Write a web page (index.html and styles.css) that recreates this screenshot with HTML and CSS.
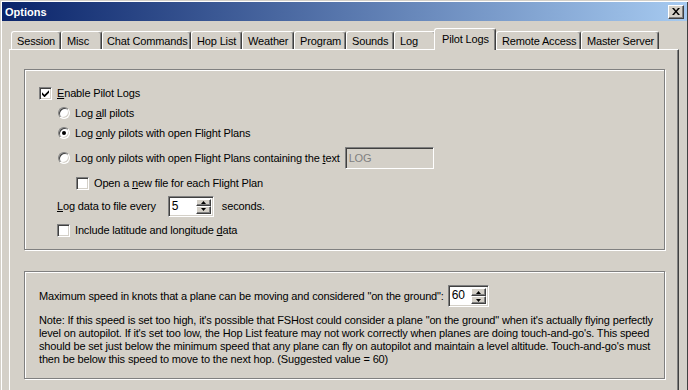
FILE: index.html
```html
<!DOCTYPE html>
<html lang="en">
<head>
    <meta charset="UTF-8">
    <meta name="viewport" content="width=device-width, initial-scale=1.0">
    <title>Options</title>
    <link rel="stylesheet" href="styles.css">
</head>
<body>
    <div class="window">
        <div class="titlebar">
            <span class="title">Options</span>
            <span class="close-btn">
                <svg width="8" height="7" viewBox="0 0 8 7"><path d="M0 0h2l2 2.4L6 0h2L5 3.5 8 7H6L4 4.6 2 7H0l3-3.5z" fill="#000"/></svg>
            </span>
        </div>

        <div class="tabs">
            <div class="tab-strip">
                <div class="tab tab-session">Session</div>
                <div class="tab tab-misc">Misc</div>
                <div class="tab tab-chat">Chat Commands</div>
                <div class="tab tab-hop">Hop List</div>
                <div class="tab tab-weather">Weather</div>
                <div class="tab tab-program">Program</div>
                <div class="tab tab-sounds">Sounds</div>
                <div class="tab tab-log">Log</div>
                <div class="tab tab-pilot active">Pilot Logs</div>
                <div class="tab tab-remote">Remote Access</div>
                <div class="tab tab-master">Master Server</div>
            </div>

            <div class="tab-panel">
                <div class="group group-logs">
                    <div class="row">
                        <span class="checkbox">
                            <svg width="7" height="7" viewBox="0 0 7 7"><path d="M0 2.2 2.5 4.7 7 .2v2.6L2.5 7.3 0 4.8z" fill="#000"/></svg>
                        </span>
                        <span><u>E</u>nable Pilot Logs</span>
                    </div>
                    <div class="row indent-radio">
                        <span class="radio"></span>
                        <span>Log <u>a</u>ll pilots</span>
                    </div>
                    <div class="row indent-radio">
                        <span class="radio checked"></span>
                        <span>Log <u>o</u>nly pilots with open Flight Plans</span>
                    </div>
                    <div class="row row-tall indent-radio">
                        <span class="radio"></span>
                        <span>Log only pilots with open Flight Plans containing the <u>t</u>ext</span>
                        <span class="edit edit-disabled">LOG</span>
                    </div>
                    <div class="row indent-sub">
                        <span class="checkbox"></span>
                        <span>Open a <u>n</u>ew file for each Flight Plan</span>
                    </div>
                    <div class="row row-spin indent-check">
                        <span><u>L</u>og data to file every</span>
                        <span class="spin spin-seconds">
                            <span class="spin-value">5</span>
                            <span class="spin-buttons">
                                <span class="spin-btn">
                                    <svg width="5" height="3" viewBox="0 0 5 3"><path d="M2.5 0 5 3H0z" fill="#000"/></svg>
                                </span>
                                <span class="spin-btn">
                                    <svg width="5" height="3" viewBox="0 0 5 3"><path d="M0 0h5L2.5 3z" fill="#000"/></svg>
                                </span>
                            </span>
                        </span>
                        <span class="unit">seconds.</span>
                    </div>
                    <div class="row row-last indent-check">
                        <span class="checkbox"></span>
                        <span>Include latitude and longitude <u>d</u>ata</span>
                    </div>
                </div>

                <div class="group group-speed">
                    <div class="row row-speed">
                        <span>Maximum speed in knots that a plane can be moving and considered "on the ground":</span>
                        <span class="spin spin-speed">
                            <span class="spin-value">60</span>
                            <span class="spin-buttons">
                                <span class="spin-btn">
                                    <svg width="5" height="3" viewBox="0 0 5 3"><path d="M2.5 0 5 3H0z" fill="#000"/></svg>
                                </span>
                                <span class="spin-btn">
                                    <svg width="5" height="3" viewBox="0 0 5 3"><path d="M0 0h5L2.5 3z" fill="#000"/></svg>
                                </span>
                            </span>
                        </span>
                    </div>
                    <p class="note">
                        Note: If this speed is set too high, it's possible that FSHost could consider a plane "on the ground" when it's actually flying perfectly<br>
                        level on autopilot. If it's set too low, the Hop List feature may not work correctly when planes are doing touch-and-go's. This speed<br>
                        should be set just below the minimum speed that any plane can fly on autopilot and maintain a level altitude. Touch-and-go's must<br>
                        then be below this speed to move to the next hop. (Suggested value = 60)
                    </p>
                </div>
            </div>
        </div>
    </div>
</body>
</html>
```

FILE: styles.css
```css
body {
    margin: 0;
    padding: 0;
    background-color: #d4d0c8;
    font-family: 'Liberation Sans', Arial, sans-serif;
    font-size: 11px;
    letter-spacing: -0.15px;
    color: #000;
    overflow: hidden;
    width: 688px;
    height: 390px;
}
.window {
    box-sizing: border-box;
    width: 688px;
    height: 404px;
    border-top: 1px solid #d4d0c8;
    border-left: 1px solid #d4d0c8;
    padding: 1px 1px 0 1px;
    box-shadow: inset 1px 1px 0 #fff, inset -1px 0 0 #404040;
    display: flex;
    flex-direction: column;
}
.titlebar {
    height: 19px;
    display: flex;
    align-items: center;
    justify-content: space-between;
    padding-left: 3px;
    background: linear-gradient(to right, #0a246a, #a6caf0);
}
.title {
    color: #fff;
    font-weight: bold;
    letter-spacing: 0;
}
.close-btn {
    box-sizing: border-box;
    width: 16px;
    height: 14px;
    margin-right: 3px;
    display: flex;
    align-items: center;
    justify-content: center;
    background-color: #d4d0c8;
    border: 1px solid;
    border-color: #fff #404040 #404040 #fff;
    box-shadow: inset -1px -1px 0 #808080;
}

/* tab control */
.tabs {
    flex: 1;
    display: flex;
    flex-direction: column;
    margin: 7px 7px 0 7px;
    width: 670px;
}
.tab-strip {
    display: flex;
    align-items: flex-end;
    padding-left: 2px;
}
.tab {
    box-sizing: border-box;
    height: 18px;
    padding: 2px 0 0 5px;
    line-height: 14px;
    white-space: nowrap;
    border-top: 1px solid #fff;
    border-left: 1px solid #fff;
    border-right: 1px solid #404040;
    border-radius: 3px 3px 0 0;
    box-shadow: inset -1px 0 0 #808080;
}
.tab-session { width: 50px; }
.tab-misc { width: 41px; }
.tab-chat { width: 89px; padding-left: 4px; }
.tab-hop { width: 51px; }
.tab-weather { width: 52px; }
.tab-program { width: 52px; }
.tab-sounds { width: 48px; }
.tab-log { width: 42px; }
.tab-pilot { width: 62px; }
.tab-remote { width: 85px; }
.tab-master { width: 78px; }
.tab.active {
    position: relative;
    z-index: 1;
    height: 22px;
    margin-left: -2px;
    margin-bottom: -1px;
    padding: 3px 0 0 7px;
    background-color: #d4d0c8;
}
.tab-panel {
    flex: 1;
    box-sizing: border-box;
    border-top: 1px solid #fff;
    border-left: 1px solid #fff;
    border-right: 1px solid #404040;
    box-shadow: inset -1px 0 0 #808080;
    padding: 19px 13px 0 14px;
}

/* group boxes */
.group {
    border: 1px solid #808080;
    box-shadow: inset 1px 1px 0 #fff, 1px 1px 0 #fff;
}
.group-logs {
    padding: 13px 0 8px 14px;
}
.group-speed {
    margin-top: 21px;
    padding: 13px 0 12px 14px;
}
.row {
    display: flex;
    align-items: center;
    gap: 5px;
    height: 20px;
    white-space: nowrap;
}
.row-tall { height: 30px; }
.row-spin { height: 26px; }
.row-last { height: 22px; }
.row-speed { height: 22px; gap: 4px; }
.indent-radio { padding-left: 19px; }
.indent-check { padding-left: 18px; }
.indent-sub { padding-left: 37px; }
u {
    text-decoration-thickness: 1px;
    text-underline-offset: 1px;
}

/* controls */
.checkbox {
    box-sizing: border-box;
    width: 13px;
    height: 13px;
    flex-shrink: 0;
    display: flex;
    align-items: center;
    justify-content: center;
    background-color: #fff;
    border: 1px solid;
    border-color: #808080 #fff #fff #808080;
    box-shadow: inset 1px 1px 0 #404040, inset -1px -1px 0 #d4d0c8;
}
.radio {
    box-sizing: border-box;
    width: 12px;
    height: 12px;
    flex-shrink: 0;
    display: flex;
    align-items: center;
    justify-content: center;
    border-radius: 50%;
    background-color: #fff;
    border: 1px solid;
    border-color: #808080 #fff #fff #808080;
    box-shadow: inset 1px 1px 0 #404040, inset -1px -1px 0 #d4d0c8;
}
.radio.checked::after {
    content: '';
    width: 4px;
    height: 4px;
    border-radius: 50%;
    background-color: #000;
}
.edit {
    box-sizing: border-box;
    height: 22px;
    display: flex;
    align-items: center;
    padding-left: 3px;
    border: 1px solid;
    border-color: #808080 #fff #fff #808080;
    box-shadow: inset 1px 1px 0 #404040, inset -1px -1px 0 #d4d0c8;
}
.edit-disabled {
    width: 89px;
    color: #808080;
}
.spin {
    box-sizing: border-box;
    height: 21px;
    display: flex;
    padding: 2px;
    background-color: #fff;
    border: 1px solid;
    border-color: #808080 #fff #fff #808080;
    box-shadow: inset 1px 1px 0 #404040, inset -1px -1px 0 #d4d0c8;
}
.spin-seconds {
    width: 46px;
    margin-left: 7px;
}
.spin-speed {
    width: 41px;
    height: 22px;
}
.spin-value {
    flex: 1;
    padding-left: 1px;
    font-size: 12px;
    line-height: 15px;
}
.spin-buttons {
    display: flex;
    flex-direction: column;
    width: 15px;
}
.spin-btn {
    box-sizing: border-box;
    flex: 1;
    display: flex;
    align-items: center;
    justify-content: center;
    background-color: #d4d0c8;
    border: 1px solid;
    border-color: #fff #404040 #404040 #fff;
    box-shadow: inset -1px -1px 0 #808080;
}
.unit {
    margin-left: 3px;
}
.note {
    margin: 7px 0 0 0;
    line-height: 13px;
    white-space: nowrap;
}
```
